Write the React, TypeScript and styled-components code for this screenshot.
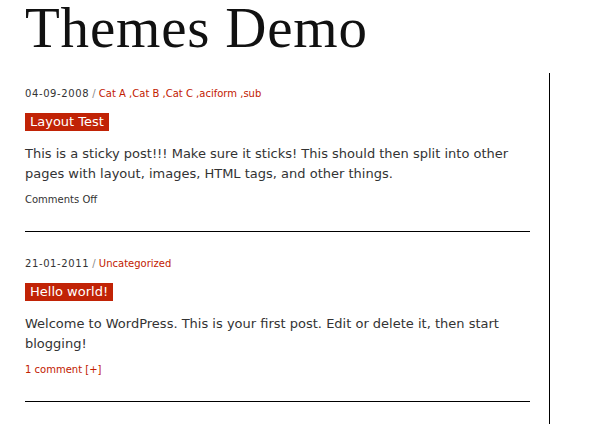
import React from 'react';
import styled, {createGlobalStyle} from 'styled-components';

const GlobalStyle = createGlobalStyle`
  html, body {
    margin: 0;
    padding: 0;
    background: #fff;
  }
  body {
    font-family: "DejaVu Sans", Verdana, sans-serif;
    color: #333;
  }
`;

type Post = {
    date: string;
    categories: string[];
    title: string;
    body: string;
    comments: string;
    commentsLink: boolean;
};

const posts: Post[] = [
    {
        date: '04-09-2008',
        categories: ['Cat A', 'Cat B', 'Cat C', 'aciform', 'sub'],
        title: 'Layout Test',
        body: 'This is a sticky post!!! Make sure it sticks! This should then split into other pages with layout, images, HTML tags, and other things.',
        comments: 'Comments Off',
        commentsLink: false,
    },
    {
        date: '21-01-2011',
        categories: ['Uncategorized'],
        title: 'Hello world!',
        body: 'Welcome to WordPress. This is your first post. Edit or delete it, then start blogging!',
        comments: '1 comment [+]',
        commentsLink: true,
    },
];

const App: React.FC = () => {
    return (
        <Page>
            <GlobalStyle/>
            <SiteTitle>Themes Demo</SiteTitle>
            <Main>
                <Content>
                    {posts.map((post) => (
                        <Entry key={post.title}>
                            <Meta>
                                <DateText>{post.date}</DateText>
                                <Slash> / </Slash>
                                {post.categories.map((cat, index) => (
                                    <React.Fragment key={cat}>
                                        {index > 0 && <Sep> ,</Sep>}
                                        <CatLink href="#">{cat}</CatLink>
                                    </React.Fragment>
                                ))}
                            </Meta>
                            <EntryTitle href="#">{post.title}</EntryTitle>
                            <EntryBody>{post.body}</EntryBody>
                            <Footer $link={post.commentsLink}>{post.comments}</Footer>
                        </Entry>
                    ))}
                </Content>
                <Sidebar/>
            </Main>
        </Page>
    );
};

const Page = styled.div`
  padding: 0 0 0 25px;
  height: 424px;
  overflow: hidden;
`;

const SiteTitle = styled.h1`
  margin: 0;
  padding-bottom: 6px;
  font-family: "Liberation Serif", Georgia, serif;
  font-weight: normal;
  font-size: 57px;
  letter-spacing: 0.8px;
  line-height: 56px;
  color: #111;
`;

const Main = styled.div`
  display: flex;
  align-items: flex-start;
`;

const Content = styled.div`
  width: 505px;
`;

const Sidebar = styled.div`
  margin-left: 19px;
  margin-top: 11px;
  height: 400px;
  border-left: 1px solid #000;
`;

const Entry = styled.div`
  padding: 25px 0 24px;
  border-bottom: 1px solid #000;
`;

const Meta = styled.div`
  font-size: 10px;
  line-height: 14px;
  color: #333;
`;

const DateText = styled.span`
  letter-spacing: 0.6px;
`;

const Slash = styled.span`
  color: #888;
`;

const Sep = styled.span`
  color: #c22000;
`;

const CatLink = styled.a`
  color: #c22000;
  text-decoration: none;
`;

const EntryTitle = styled.a`
  display: inline-block;
  margin-top: 12px;
  padding: 0 5px;
  background: #c12306;
  color: #fff;
  font-size: 13px;
  line-height: 18px;
  text-decoration: none;
`;

const EntryBody = styled.p`
  margin: 13px 0 0;
  font-size: 13px;
  line-height: 20px;
  color: #333;
`;

const Footer = styled.div<{ $link: boolean }>`
  margin-top: 9px;
  font-size: 10px;
  line-height: 14px;
  color: ${({$link}) => ($link ? '#c22000' : '#333')};
`;

export default App;
